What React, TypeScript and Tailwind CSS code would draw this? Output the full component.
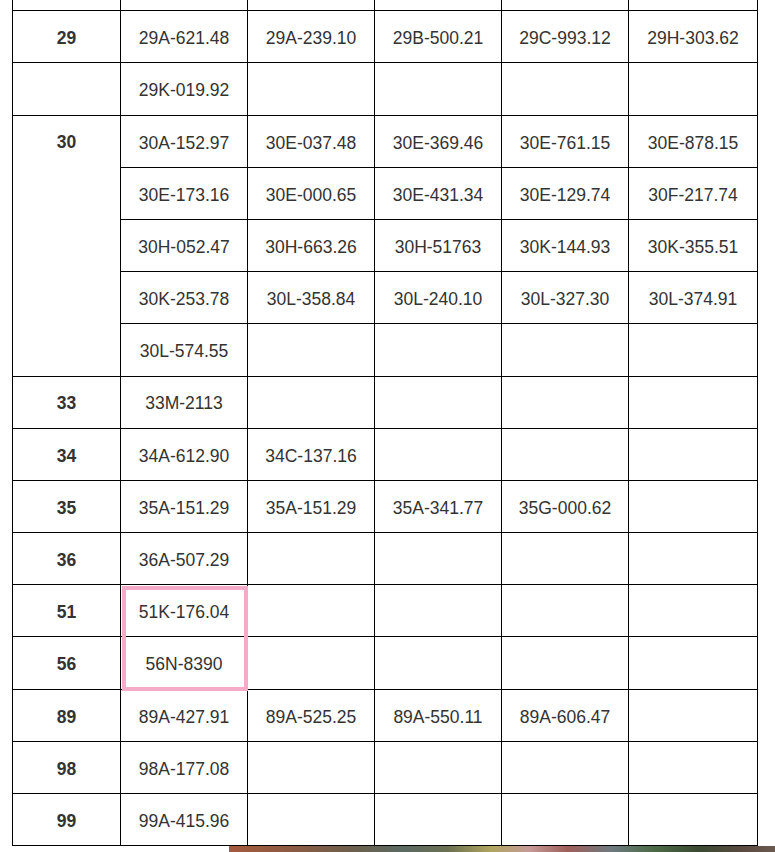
import React from "react";

type Row = { code: string; first: boolean; plates: string[] };

const rows: Row[] = [
  { code: "29", first: true, plates: ["29A-621.48", "29A-239.10", "29B-500.21", "29C-993.12", "29H-303.62"] },
  { code: "", first: true, plates: ["29K-019.92"] },
  { code: "30", first: true, plates: ["30A-152.97", "30E-037.48", "30E-369.46", "30E-761.15", "30E-878.15"] },
  { code: "30", first: false, plates: ["30E-173.16", "30E-000.65", "30E-431.34", "30E-129.74", "30F-217.74"] },
  { code: "30", first: false, plates: ["30H-052.47", "30H-663.26", "30H-51763", "30K-144.93", "30K-355.51"] },
  { code: "30", first: false, plates: ["30K-253.78", "30L-358.84", "30L-240.10", "30L-327.30", "30L-374.91"] },
  { code: "30", first: false, plates: ["30L-574.55"] },
  { code: "33", first: true, plates: ["33M-2113"] },
  { code: "34", first: true, plates: ["34A-612.90", "34C-137.16"] },
  { code: "35", first: true, plates: ["35A-151.29", "35A-151.29", "35A-341.77", "35G-000.62"] },
  { code: "36", first: true, plates: ["36A-507.29"] },
  { code: "51", first: true, plates: ["51K-176.04"] },
  { code: "56", first: true, plates: ["56N-8390"] },
  { code: "89", first: true, plates: ["89A-427.91", "89A-525.25", "89A-550.11", "89A-606.47"] },
  { code: "98", first: true, plates: ["98A-177.08"] },
  { code: "99", first: true, plates: ["99A-415.96"] },
];

const cell = "border border-black h-[52.2px] text-center align-middle px-0 pb-0 pt-[3px]";

export default function App() {
  return (
    <div className="relative w-[775px] h-[852px] overflow-hidden bg-white font-['Liberation_Sans',Arial,sans-serif] text-[17.5px] text-[#333]">
      <table className="ml-[12px] mt-[-42px] w-[745px] table-fixed border-collapse">
        <colgroup>
          <col className="w-[108px]" />
          <col className="w-[127px]" />
          <col className="w-[127px]" />
          <col className="w-[127px]" />
          <col className="w-[127px]" />
          <col className="w-[129px]" />
        </colgroup>
        <tbody>
          <tr>
            <td className={cell}></td>
            <td className={cell}></td>
            <td className={cell}></td>
            <td className={cell}></td>
            <td className={cell}></td>
            <td className={cell}></td>
          </tr>
          {rows.map((r, i) => (
            <tr key={i}>
              {r.first && (
                <td
                  rowSpan={r.code === "30" ? 5 : 1}
                  className={`${cell} font-bold text-[17.5px] ${r.code === "30" ? "!align-top !pt-[13px]" : ""}`}
                >
                  {r.code}
                </td>
              )}
              {[0, 1, 2, 3, 4].map((k) => (
                <td key={k} className={cell}>
                  {r.plates[k] ?? ""}
                </td>
              ))}
            </tr>
          ))}
        </tbody>
      </table>

      {/* pink highlight drawn over 51/56 plates */}
      <div className="absolute left-[122px] top-[586px] w-[126px] h-[105px] border-4 border-[#f5abc8]" />

      {/* photo peeking below the table */}
      <div className="absolute left-[229px] top-[846px] w-[546px] h-[10px] bg-[linear-gradient(90deg,#a65a3e_0%,#8a5b42_12%,#6e5f4c_22%,#5a6a62_32%,#6b7050_40%,#b0a560_48%,#c69a98_55%,#9e5f5a_62%,#6d7a80_70%,#4c6a45_78%,#3a4a32_86%,#5a4a40_94%,#6a5a50_100%)]" />
    </div>
  );
}
